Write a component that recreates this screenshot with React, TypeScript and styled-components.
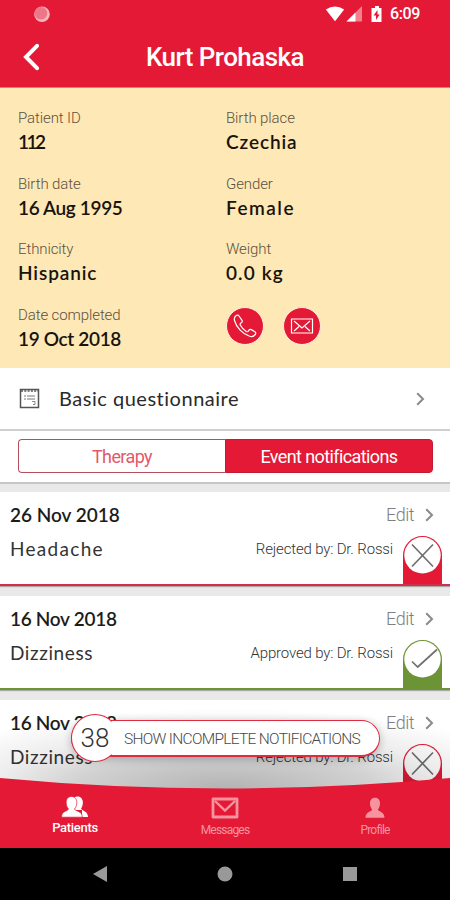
import React from 'react';
import styled, { createGlobalStyle } from 'styled-components';

const RED = '#e41935';
const GREEN = '#6c9335';

const GlobalStyle = createGlobalStyle`
  * { box-sizing: border-box; }
  body { margin: 0; background: #000; }
`;

const Screen = styled.div`
  position: relative;
  display: flex;
  flex-direction: column;
  width: 450px;
  height: 900px;
  overflow: hidden;
  background: #fff;
  font-family: Roboto, 'Liberation Sans', sans-serif;
`;

const StatusBar = styled.div`
  display: flex;
  align-items: center;
  height: 28px;
  flex: none;
  padding: 0 30px 0 34px;
  background: ${RED};
  color: #fff;
`;

const StatusIcons = styled.div`
  display: flex;
  align-items: center;
  margin-left: auto;
`;

const Clock = styled.span`
  margin-left: 7px;
  font-size: 16px;
  font-weight: 500;
  letter-spacing: -0.4px;
  line-height: 28px;
`;

const Header = styled.header`
  display: grid;
  grid-template-columns: 60px 1fr 60px;
  align-items: center;
  flex: none;
  height: 60px;
  background: ${RED};
  border-bottom: 1px solid #ee7a67;
`;

const BackButton = styled.button`
  display: flex;
  padding: 0 0 1px 22px;
  border: 0;
  background: none;
`;

const Title = styled.h1`
  margin: 0;
  text-align: center;
  color: #fff;
  font-size: 26px;
  font-weight: 500;
  letter-spacing: -0.55px;
  line-height: 59px;
`;

const PatientPanel = styled.section`
  display: grid;
  grid-template-columns: 208px 1fr;
  grid-auto-rows: 48px;
  row-gap: 17.6px;
  flex: none;
  height: 280px;
  padding: 20px 18px 0;
  background: #fde8b6;
`;

const FieldLabel = styled.div`
  color: #5c5140;
  font-size: 15px;
  font-weight: 300;
  letter-spacing: -0.1px;
  line-height: 20px;
  white-space: nowrap;
`;

const FieldValue = styled.div<{ $spacing: number }>`
  color: #18130c;
  font-family: Lato, sans-serif;
  font-size: 19px;
  font-weight: 600;
  letter-spacing: ${(p) => p.$spacing}px;
  line-height: 27px;
  white-space: nowrap;
`;

const ContactActions = styled.div`
  display: flex;
  gap: 19px;
  padding: 2px 0 0;
`;

const RoundButton = styled.button`
  display: grid;
  place-items: center;
  width: 38px;
  height: 38px;
  padding: 0;
  border: 1px solid #fff2dc;
  border-radius: 50%;
  background: ${RED};
`;

const QuestionnaireRow = styled.div`
  display: flex;
  align-items: center;
  flex: none;
  height: 63px;
  padding: 0 25px 0 19px;
  border-bottom: 2px solid #d0d0d0;
`;

const QuestionnaireTitle = styled.span`
  flex: 1;
  margin: -2px 0 0 19px;
  color: #2a2a2a;
  font-family: Lato, sans-serif;
  font-size: 20px;
  letter-spacing: 0.52px;
`;

const TabBar = styled.div`
  display: flex;
  flex: none;
  height: 53px;
  padding: 8px 17px 9px 18px;
  border-bottom: 2px solid #c6c6c6;
`;

const Tab = styled.button<{ $active?: boolean }>`
  flex: 1;
  padding: 0;
  border: 1.500px solid ${(p) => (p.$active ? '#c21c32' : '#b4505e')};
  border-right-width: ${(p) => (p.$active ? 1 : 0)}px;
  border-radius: ${(p) => (p.$active ? '0 4px 4px 0' : '4px 0 0 4px')};
  background: ${(p) => (p.$active ? RED : '#fff')};
  color: ${(p) => (p.$active ? '#fff' : '#e4586a')};
  font-family: inherit;
  font-size: 18px;
  letter-spacing: -0.6px;
`;

const EventList = styled.div`
  display: flex;
  flex-direction: column;
  gap: 10px;
  flex: none;
  height: 364px;
  padding-top: 8px;
  overflow: hidden;
  background: #e9e9e9;
`;

const EventCard = styled.article<{ $color: string }>`
  flex: none;
  height: 94px;
  border-bottom: 2px solid ${(p) => p.$color};
  background: #fff;
  box-shadow: 0 1px 1px #aaa;
`;

const CardTop = styled.div`
  display: flex;
  align-items: center;
  height: 44px;
  padding: 1px 16px 0 10px;
`;

const CardBottom = styled.div`
  display: flex;
  height: 48px;
  padding: 0 8px 0 10px;
`;

const EventDate = styled.span<{ $spacing: number }>`
  flex: 1;
  color: #1c1c1c;
  font-family: Lato, sans-serif;
  font-size: 19px;
  font-weight: 600;
  letter-spacing: ${(p) => p.$spacing}px;
`;

const EditLabel = styled.span`
  margin-right: 11px;
  color: #808080;
  font-size: 18px;
  font-weight: 300;
  letter-spacing: -0.5px;
`;

const Symptom = styled.span<{ $spacing: number }>`
  flex: 1;
  color: #333;
  font-family: Lato, sans-serif;
  font-size: 19px;
  letter-spacing: ${(p) => p.$spacing}px;
  line-height: 26px;
`;

const Reviewer = styled.span`
  margin-right: 10px;
  color: #333;
  font-size: 15px;
  font-weight: 300;
  letter-spacing: -0.16px;
  line-height: 27px;
`;

const Fade = styled.div`
  position: absolute;
  top: 708px;
  left: 0;
  width: 450px;
  height: 82px;
  background: radial-gradient(ellipse 330px 82px at 50% 100%, rgba(0, 0, 0, 0.3), rgba(0, 0, 0, 0.18) 45%, rgba(0, 0, 0, 0.07) 70%, rgba(0, 0, 0, 0) 100%);
`;

const Nav = styled.nav`
  position: relative;
  flex: none;
  height: 70px;
  margin-top: -70px;
`;

const NavCurve = styled.svg`
  position: absolute;
  inset: 0;
`;

const NavItems = styled.div`
  position: relative;
  display: grid;
  grid-template-columns: repeat(3, 1fr);
  height: 70px;
`;

const NavItem = styled.div<{ $active?: boolean }>`
  display: flex;
  flex-direction: column;
  align-items: center;
  padding-top: ${(p) => (p.$active ? 18 : 19)}px;
  color: ${(p) => (p.$active ? '#fff' : '#f5949f')};
  font-size: ${(p) => (p.$active ? 13 : 12)}px;
  font-weight: ${(p) => (p.$active ? 500 : 400)};
  letter-spacing: ${(p) => (p.$active ? -0.3 : -0.8)}px;
  line-height: ${(p) => (p.$active ? 19 : 22)}px;
`;

const IncompletePill = styled.button`
  position: absolute;
  top: 720px;
  left: 71px;
  display: flex;
  align-items: center;
  width: 309px;
  height: 37px;
  padding: 0;
  border: 1px solid #e02a40;
  border-bottom-width: 2px;
  border-radius: 20px;
  background: #fff;
  box-shadow: 0 2px 8px rgba(0, 0, 0, 0.25);
  font-family: inherit;
`;

const PillCount = styled.span`
  display: grid;
  place-items: center;
  flex: none;
  width: 48px;
  height: 48px;
  margin-left: -1px;
  border: 1.500px solid #e02a40;
  border-right-color: transparent;
  border-radius: 50%;
  background: #fff;
  color: #333;
  font-size: 26px;
  font-weight: 300;
`;

const PillLabel = styled.span`
  margin: 2px 0 0 5px;
  color: #484848;
  font-size: 15.500px;
  font-weight: 300;
  letter-spacing: -0.7px;
  white-space: nowrap;
`;

const SystemBar = styled.div`
  display: grid;
  grid-template-columns: 200px 50px 200px;
  place-items: center;
  flex: none;
  height: 52px;
  background: #000;
`;

const Chevron = () => (
  <svg width="9" height="14" viewBox="0 0 9 14" fill="none" stroke="#8a8a8a" strokeWidth="2">
    <path d="M1.2 1.2 7 7l-5.8 5.8" />
  </svg>
);

const StatusBadge = ({ approved }: { approved: boolean }) => (
  <svg width="39" height="48" viewBox="0 0 39 48">
    <path d="M0 19.500a19.500 19.500 0 0 1 39 0V48H0z" fill={approved ? GREEN : RED} />
    <circle cx="19.500" cy="19.300" r="18.200" fill="#fff" />
    <path
      d={approved ? 'M9 21.500 14.700 27 34 9.500' : 'm9 8.500 21 22M30 8.500l-21 22'}
      fill="none"
      stroke="#707070"
      strokeWidth="1.700"
    />
  </svg>
);

const fields = [
  { label: 'Patient ID', value: '112', spacing: -2.5 },
  { label: 'Birth place', value: 'Czechia', spacing: 0.9 },
  { label: 'Birth date', value: '16 Aug 1995', spacing: -0.35 },
  { label: 'Gender', value: 'Female', spacing: 1.5 },
  { label: 'Ethnicity', value: 'Hispanic', spacing: 0.9 },
  { label: 'Weight', value: '0.0 kg', spacing: 1.1 },
  { label: 'Date completed', value: '19 Oct 2018', spacing: -0.35 },
];

const events = [
  { date: '26 Nov 2018', dateSpacing: -0.02, symptom: 'Headache', spacing: 1.3, approved: false },
  { date: '16 Nov 2018', dateSpacing: -0.3, symptom: 'Dizziness', spacing: 0.6, approved: true },
  { date: '16 Nov 2018', dateSpacing: -0.3, symptom: 'Dizziness', spacing: 0.6, approved: false },
];

export default function App() {
  return (
    <Screen>
      <GlobalStyle />
      <StatusBar>
        <svg width="17" height="17" viewBox="0 0 17 17">
          <circle cx="8" cy="8.200" r="7.800" fill="#f6b5bb" />
          <circle cx="6.900" cy="7.300" r="6.300" fill="#ee7787" />
        </svg>
        <StatusIcons>
          <svg width="58" height="18" viewBox="0 0 58 18" fill="#fff">
            <path d="M.8 4.600Q10 -1.800 19.200 4.600L10 16.200z" />
            <path d="M21.500 16.500 37 1v15.500z" fill="#f17f8d" />
            <path d="M21.500 16.500 30.500 7.500v9z" />
            <path d="M50 1h4v2h2.500v14h-10V3H50z" />
            <path d="m52.500 5-4 5.500h2.500V15l3.700-5.500h-2.200z" fill={RED} />
          </svg>
          <Clock>6:09</Clock>
        </StatusIcons>
      </StatusBar>
      <Header>
        <BackButton aria-label="Back">
          <svg width="19" height="28" viewBox="0 0 19 28" fill="none" stroke="#fff" strokeWidth="4" strokeLinecap="round">
            <path d="M15 2.800 4 14l11 11.200" />
          </svg>
        </BackButton>
        <Title>Kurt Prohaska</Title>
      </Header>

      <PatientPanel>
        {fields.map((f) => (
          <div key={f.label}>
            <FieldLabel>{f.label}</FieldLabel>
            <FieldValue $spacing={f.spacing}>{f.value}</FieldValue>
          </div>
        ))}
        <ContactActions>
          <RoundButton aria-label="Call">
            <svg width="26" height="26" viewBox="0 0 28 28" fill="none" stroke="#fff" strokeWidth="1.300" strokeLinejoin="round">
              <path d="M5 2.500c-2 1.200-3 3-2.300 5.600C4.600 15.500 11.500 22.500 19 25c2.800.900 5-.200 6.300-2.300.5-1 .2-1.900-.7-2.500l-3.800-2.300c-1-.5-1.800-.3-2.500.5l-1 1.300c-.5.600-1.200.6-1.900.2-3-1.900-5-4-6.500-6.900-.4-.8-.2-1.400.4-1.900l1-.8c.8-.7 1-1.500.5-2.400L7.600 3.200C7 2.200 6.100 2 5 2.500z" />
            </svg>
          </RoundButton>
          <RoundButton aria-label="Email">
            <svg width="24" height="18" viewBox="0 0 24 18" fill="none" stroke="#fff" strokeWidth="1.200">
              <path d="M1.500 2h21v14h-21zM4 4l8 7 8-7M4 14l5-4.500M20 14l-5-4.500" />
            </svg>
          </RoundButton>
        </ContactActions>
      </PatientPanel>

      <QuestionnaireRow>
        <svg width="21" height="21" viewBox="0 0 21 21" fill="none" stroke="#555">
          <path d="M1.500 1.500h18v18h-18z" strokeWidth="1.500" />
          <path d="M2 3h17" strokeWidth="1.500" strokeDasharray="2 1.300" />
          <path d="M5 8h2m1 0h8M5 11h2m1 0h8" stroke="#777" />
          <path d="M13 13.500h3v3h-2" stroke="#888" />
        </svg>
        <QuestionnaireTitle>Basic questionnaire</QuestionnaireTitle>
        <Chevron />
      </QuestionnaireRow>

      <TabBar>
        <Tab>Therapy</Tab>
        <Tab $active>Event notifications</Tab>
      </TabBar>

      <EventList>
        {events.map((e, i) => (
          <EventCard key={i} $color={e.approved ? GREEN : '#d42e49'}>
            <CardTop>
              <EventDate $spacing={e.dateSpacing}>{e.date}</EventDate>
              <EditLabel>Edit</EditLabel>
              <Chevron />
            </CardTop>
            <CardBottom>
              <Symptom $spacing={e.spacing}>{e.symptom}</Symptom>
              <Reviewer>{e.approved ? 'Approved' : 'Rejected'} by: Dr. Rossi</Reviewer>
              <StatusBadge approved={e.approved} />
            </CardBottom>
          </EventCard>
        ))}
      </EventList>

      <Fade />
      <IncompletePill>
        <PillCount>38</PillCount>
        <PillLabel>SHOW INCOMPLETE NOTIFICATIONS</PillLabel>
      </IncompletePill>

      <Nav>
        <NavCurve width="450" height="70" viewBox="0 0 450 70">
          <path d="M0 0Q225 21 450 0V70H0z" fill={RED} />
        </NavCurve>
        <NavItems>
          <NavItem $active>
            <svg width="28" height="22" viewBox="0 0 28 22" fill="currentColor">
              <path d="M13 2C15-.3 21-.3 21.800 5.500c.3 3-.6 5.300-1.800 7 1 2.500 7 2.500 7 8.500h-6V14h-7z" />
              <path d="M10.500.5c3.500 0 5.500 2.800 5.300 6.500-.1 2.600-1 4.600-2.300 6 1 2.500 7.800 1.800 7.800 8.200H.5c0-6.400 6-5.700 7-8.200C6.200 11.600 5.300 9.600 5.200 7 5 3.300 7 .5 10.500.5z" stroke={RED} strokeWidth=".7" />
            </svg>
            Patients
          </NavItem>
          <NavItem>
            <svg width="28" height="22" viewBox="0 0 28 22" fill="none" stroke="currentColor" strokeWidth="2.800">
              <path d="M2 2h24v18H2z" strokeLinejoin="round" />
              <path d="m4 4 10 9.500L24 4" strokeWidth="2.400" />
            </svg>
            Messages
          </NavItem>
          <NavItem>
            <svg width="22" height="22" viewBox="0 0 22 22" fill="currentColor">
              <path d="M11 .8c3.500 0 5.200 2.700 5 6-.1 2.500-1 4.500-2.200 5.700.8 2.500 6.700 2 6.700 8.200h-19c0-6.200 5.900-5.700 6.700-8.200C7 11.300 6.100 9.300 6 6.800c-.2-3.300 1.500-6 5-6z" />
            </svg>
            Profile
          </NavItem>
        </NavItems>
      </Nav>

      <SystemBar>
        <svg width="14" height="16" viewBox="0 0 14 16">
          <path d="M0 8 14 0v16z" fill="#999" />
        </svg>
        <svg width="16" height="16" viewBox="0 0 16 16">
          <circle cx="8" cy="8" r="7.500" fill="#999" />
        </svg>
        <svg width="14" height="14" viewBox="0 0 14 14">
          <path d="M0 0h14v14H0z" fill="#999" />
        </svg>
      </SystemBar>
    </Screen>
  );
}
